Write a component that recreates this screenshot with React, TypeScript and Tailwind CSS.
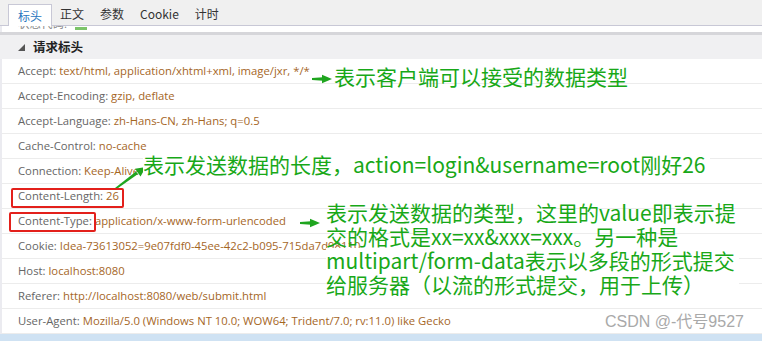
import React from "react";

const rows: [string, string][] = [
  ["Accept", "text/html, application/xhtml+xml, image/jxr, */*"],
  ["Accept-Encoding", "gzip, deflate"],
  ["Accept-Language", "zh-Hans-CN, zh-Hans; q=0.5"],
  ["Cache-Control", "no-cache"],
  ["Connection", "Keep-Alive"],
  ["Content-Length", "26"],
  ["Content-Type", "application/x-www-form-urlencoded"],
  ["Cookie", "Idea-73613052=9e07fdf0-45ee-42c2-b095-715da7d98110"],
  ["Host", "localhost:8080"],
  ["Referer", "http://localhost:8080/web/submit.html"],
  ["User-Agent", "Mozilla/5.0 (Windows NT 10.0; WOW64; Trident/7.0; rv:11.0) like Gecko"],
];

const tabs = ["标头", "正文", "参数", "Cookie", "计时"];

function Arrow({ className }: { className: string }) {
  return (
    <svg className={className} width="20" height="10" viewBox="0 0 20 10">
      <polygon points="0,4 11,3.2 11,6.8 0,6" fill="#1fa51f" />
      <polygon points="10,0.8 20,5 10,9.2" fill="#1fa51f" />
    </svg>
  );
}

export default function App() {
  return (
    <div className="relative w-[762px] h-[341px] overflow-hidden flex flex-col bg-[#ebebf0] font-['Open_Sans','Noto_Sans_CJK_SC',sans-serif]">
      {/* tab strip */}
      <div className="flex items-end h-[26px] shrink-0 pl-[8px] bg-[#f0f0f0] border-b border-[#c8c8d6] text-[12px] text-[#333] font-['Noto_Sans_CJK_SC',sans-serif]">
        {tabs.map((t, i) =>
          i === 0 ? (
            <div key={t} className="h-[22px] px-[9px] -mb-px flex items-center bg-white border border-b-0 border-[#c8c8d6] text-[#2a76c0]">
              {t}
            </div>
          ) : (
            <div key={t} className="h-[22px] px-[8px] flex items-center">
              {t}
            </div>
          )
        )}
      </div>

      {/* previous row, scrolled off */}
      <div className="h-[6px] shrink-0 ml-[2px] bg-white overflow-hidden">
        <div className="-mt-[11px] pl-[16px] flex items-center gap-[8px] text-[11.5px] text-[#888]">
          <span>状态代码:</span>
          <span className="w-[12px] h-[3px] mt-[10px] bg-[#7cc46a]" />
        </div>
      </div>
      <div className="h-[3px] shrink-0 bg-[#d6d6da]" />

      {/* section header */}
      <div className="h-[24px] shrink-0 flex items-center gap-[8px] pl-[18px] bg-[#f0f0f2]">
        <svg width="7" height="7" viewBox="0 0 7 7">
          <polygon points="7,0 7,7 0,7" fill="#555" />
        </svg>
        <span className="text-[12.5px] font-bold text-[#222] font-['Noto_Sans_CJK_SC',sans-serif]">请求标头</span>
      </div>

      {/* header rows */}
      <div className="ml-[2px] bg-white">
        {rows.map(([k, v]) => (
          <div key={k} className="h-[25px] flex items-center pl-[16px] border-b border-[#ececec] text-[11.3px] whitespace-nowrap">
            <span className="text-[#666]">{k}:</span>
            <span className="ml-[3px] text-[#a5661f]">{v}</span>
          </div>
        ))}
      </div>
      <div className="flex-1 bg-[#cfe2f3]" />

      {/* annotations */}
      <Arrow className="absolute left-[312px] top-[74px]" />
      <div className="absolute left-[334px] top-[64px] text-[21px] leading-[24px] text-[#18a818] font-['Noto_Sans_CJK_SC',sans-serif] whitespace-nowrap">
        表示客户端可以接受的数据类型
      </div>

      <svg className="absolute left-[112px] top-[164px]" width="36" height="28" viewBox="0 0 36 28">
        <polygon points="3,24 4,25.5 26,10 24,7.5" fill="#1fa51f" />
        <polygon points="34,3 28.5,12.5 23,4.8" fill="#1fa51f" />
      </svg>
      <div className="absolute left-[143px] top-[152px] pr-[4px] bg-white text-[21px] leading-[25px] text-[#18a818] font-['Noto_Sans_CJK_SC',sans-serif] whitespace-nowrap">
        表示发送数据的长度，action=login&amp;username=root刚好26
      </div>

      <div className="absolute left-[11px] top-[188px] w-[113px] h-[20px] border-2 border-[#e3201b] rounded-[2px]" />
      <div className="absolute left-[9px] top-[212px] w-[87px] h-[20px] border-2 border-[#e3201b] rounded-[2px]" />

      <Arrow className="absolute left-[300px] top-[218px]" />
      <div className="absolute left-[326px] top-[200px] text-[21px] leading-[24px] text-[#18a818] font-['Noto_Sans_CJK_SC',sans-serif] whitespace-nowrap">
        <div>表示发送数据的类型，这里的value即表示提</div>
        <div>交的格式是xx=xx&amp;xxx=xxx。另一种是</div>
        <div className="bg-white pr-[4px]">multipart/form-data表示以多段的形式提交</div>
        <div className="bg-white pr-[4px]">给服务器（以流的形式提交，用于上传）</div>
      </div>

      <div className="absolute left-[605px] top-[312px] text-[16px] leading-[20px] text-[#a9a9a9] font-['Liberation_Sans','Noto_Sans_CJK_SC',sans-serif]">
        CSDN @-代号9527
      </div>
    </div>
  );
}
